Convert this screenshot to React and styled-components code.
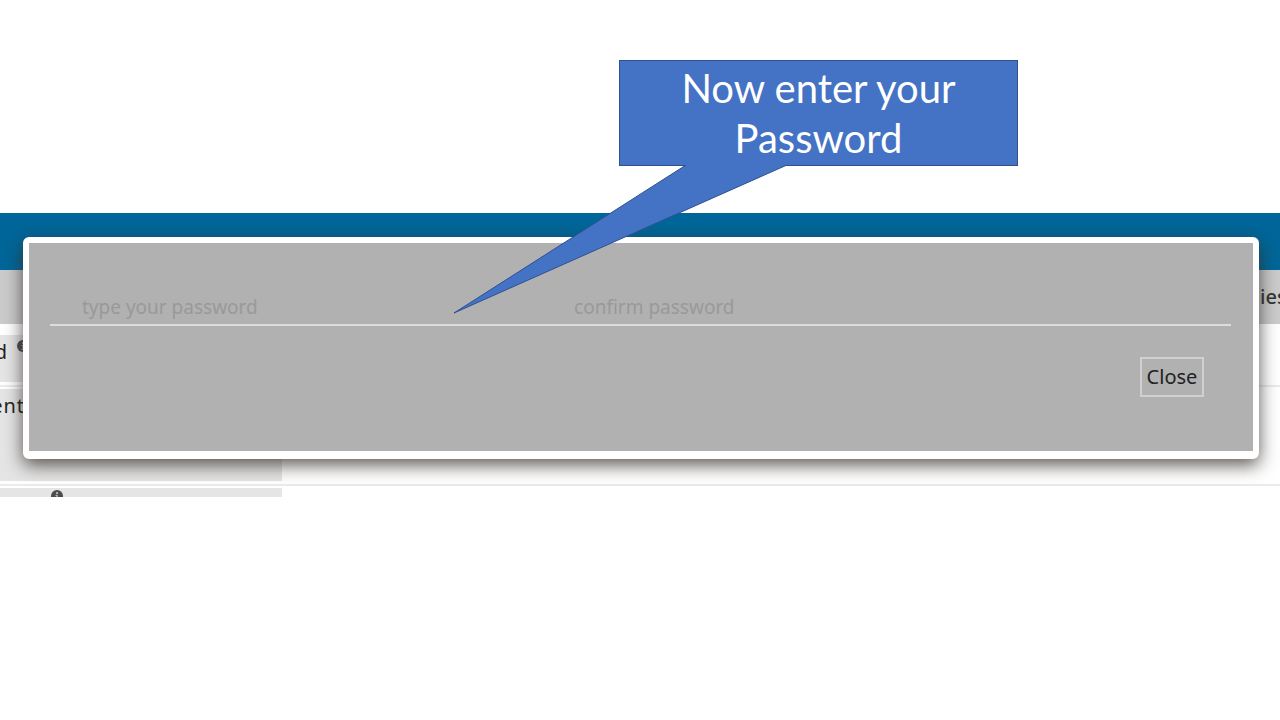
import React from "react";
import styled, { createGlobalStyle } from "styled-components";

const GlobalStyle = createGlobalStyle`
  * { box-sizing: border-box; }
  body { margin: 0; background: #fff; font-family: "Noto Sans", "Open Sans", sans-serif; }
`;

const Slide = styled.main`
  position: relative;
  padding: 213px 0 32px;
  overflow: hidden;
`;

const AppWindow = styled.section`
  position: relative;
  overflow: hidden;
`;

const TopBar = styled.header`
  height: 57px;
  background: #006699;
`;

const TabStrip = styled.nav`
  display: flex;
  justify-content: flex-end;
  align-items: center;
  height: 54px;
  background: #cbcbcb;
`;

const Tab = styled.span`
  width: 20px;
  overflow: hidden;
  white-space: nowrap;
  font-size: 20px;
  font-weight: 500;
  line-height: 28px;
  color: #333;
`;

const Rows = styled.div`
  padding-top: 11px;
`;

const Row = styled.div`
  height: ${(p) => p.$height}px;
  border-bottom: 2px solid #ebebeb;
  margin-bottom: 2px;
  &:last-child { border: 0; margin: 0; }
`;

const Cell = styled.div`
  display: flex;
  align-items: flex-start;
  width: 282px;
  height: ${(p) => p.$height}px;
  background: #e5e5e5;
`;

const CellLabel = styled.span`
  display: flex;
  justify-content: flex-end;
  width: ${(p) => p.$width}px;
  padding-top: 3px;
  overflow: hidden;
  white-space: nowrap;
  font-size: 20px;
  line-height: 28px;
  letter-spacing: 1px;
  color: #222;
`;

const Info = styled.svg`
  flex: none;
  width: 12px;
  height: 12px;
  margin: ${(p) => p.$top}px 0 0 ${(p) => p.$left}px;
`;

const Dialog = styled.form`
  position: absolute;
  top: 24px;
  left: 23px;
  right: 21px;
  height: 222px;
  padding: 46px 22px 0 21px;
  border: 6px solid #fff;
  border-bottom-width: 8px;
  border-radius: 6px;
  background: #b1b1b1 padding-box;
  box-shadow: 0 6px 18px rgba(50, 45, 40, 0.8);
`;

const Fields = styled.div`
  display: grid;
  grid-template-columns: 5fr 7fr;
  border-bottom: 2px solid #dcdcdc;
`;

const Field = styled.input`
  width: 100%;
  height: 35px;
  padding: 0 32px;
  border: 0;
  outline: 0;
  background: transparent;
  font: 19px/28px "Noto Sans", "Open Sans", sans-serif;
  color: #333;
  &::placeholder { color: #999; opacity: 1; }
`;

const Actions = styled.div`
  display: flex;
  justify-content: flex-end;
  padding: 31px 27px 0 0;
`;

const CloseButton = styled.button`
  width: 64px;
  height: 40px;
  padding: 0;
  border: 2px solid #d0d0d0;
  background: transparent;
  font: 20px/28px "Noto Sans", "Open Sans", sans-serif;
  color: #222;
`;

const Callout = styled.aside`
  position: absolute;
  top: 60px;
  left: 619px;
  width: 399px;
  height: 106px;
  padding: 2px 48px;
  border: 1px solid #2f528f;
  background: #4472c4;
  text-align: center;
  font: 40px/50px Lato, sans-serif;
  color: #fff;
`;

const Tail = styled.svg`
  position: absolute;
  top: 104px;
  left: -167px;
  width: 340px;
  height: 152px;
  pointer-events: none;
`;

function InfoIcon({ top, left }) {
  return (
    <Info $top={top} $left={left} viewBox="0 0 12 12" aria-hidden="true">
      <circle cx="6" cy="6" r="6" fill="#4b4b4b" />
      <circle cx="6" cy="3.2" r="1.1" fill="#bbb" />
      <path d="M4.5 5h2.2v4h1v1H4.4V9h1V6h-.9z" fill="#bbb" />
    </Info>
  );
}

export default function App() {
  return (
    <>
      <GlobalStyle />
      <Slide>
        <AppWindow>
          <TopBar />
          <TabStrip>
            <Tab>ies</Tab>
          </TabStrip>
          <Rows>
            <Row $height={52}>
              <Cell $height={47}>
                <CellLabel $width={8}>d</CellLabel>
                <InfoIcon top={5} left={9} />
              </Cell>
            </Row>
            <Row $height={97}>
              <Cell $height={92}>
                <CellLabel $width={25}>ent</CellLabel>
              </Cell>
            </Row>
            <Row $height={9}>
              <Cell $height={9}>
                <InfoIcon top={2} left={51} />
              </Cell>
            </Row>
          </Rows>
          <Dialog onSubmit={(e) => e.preventDefault()}>
            <Fields>
              <Field type="password" aria-label="Password" placeholder="type your password" />
              <Field type="password" aria-label="Confirm password" placeholder="confirm password" />
            </Fields>
            <Actions>
              <CloseButton type="button">Close</CloseButton>
            </Actions>
          </Dialog>
        </AppWindow>
        <Callout>
          Now enter your Password
          <Tail viewBox="0 0 340 152" aria-hidden="true">
            <path d="M233 0 1 148 334 0Z" fill="#4472c4" />
            <path d="M233 0 1 148 334 0" fill="none" stroke="#2f528f" />
          </Tail>
        </Callout>
      </Slide>
    </>
  );
}
